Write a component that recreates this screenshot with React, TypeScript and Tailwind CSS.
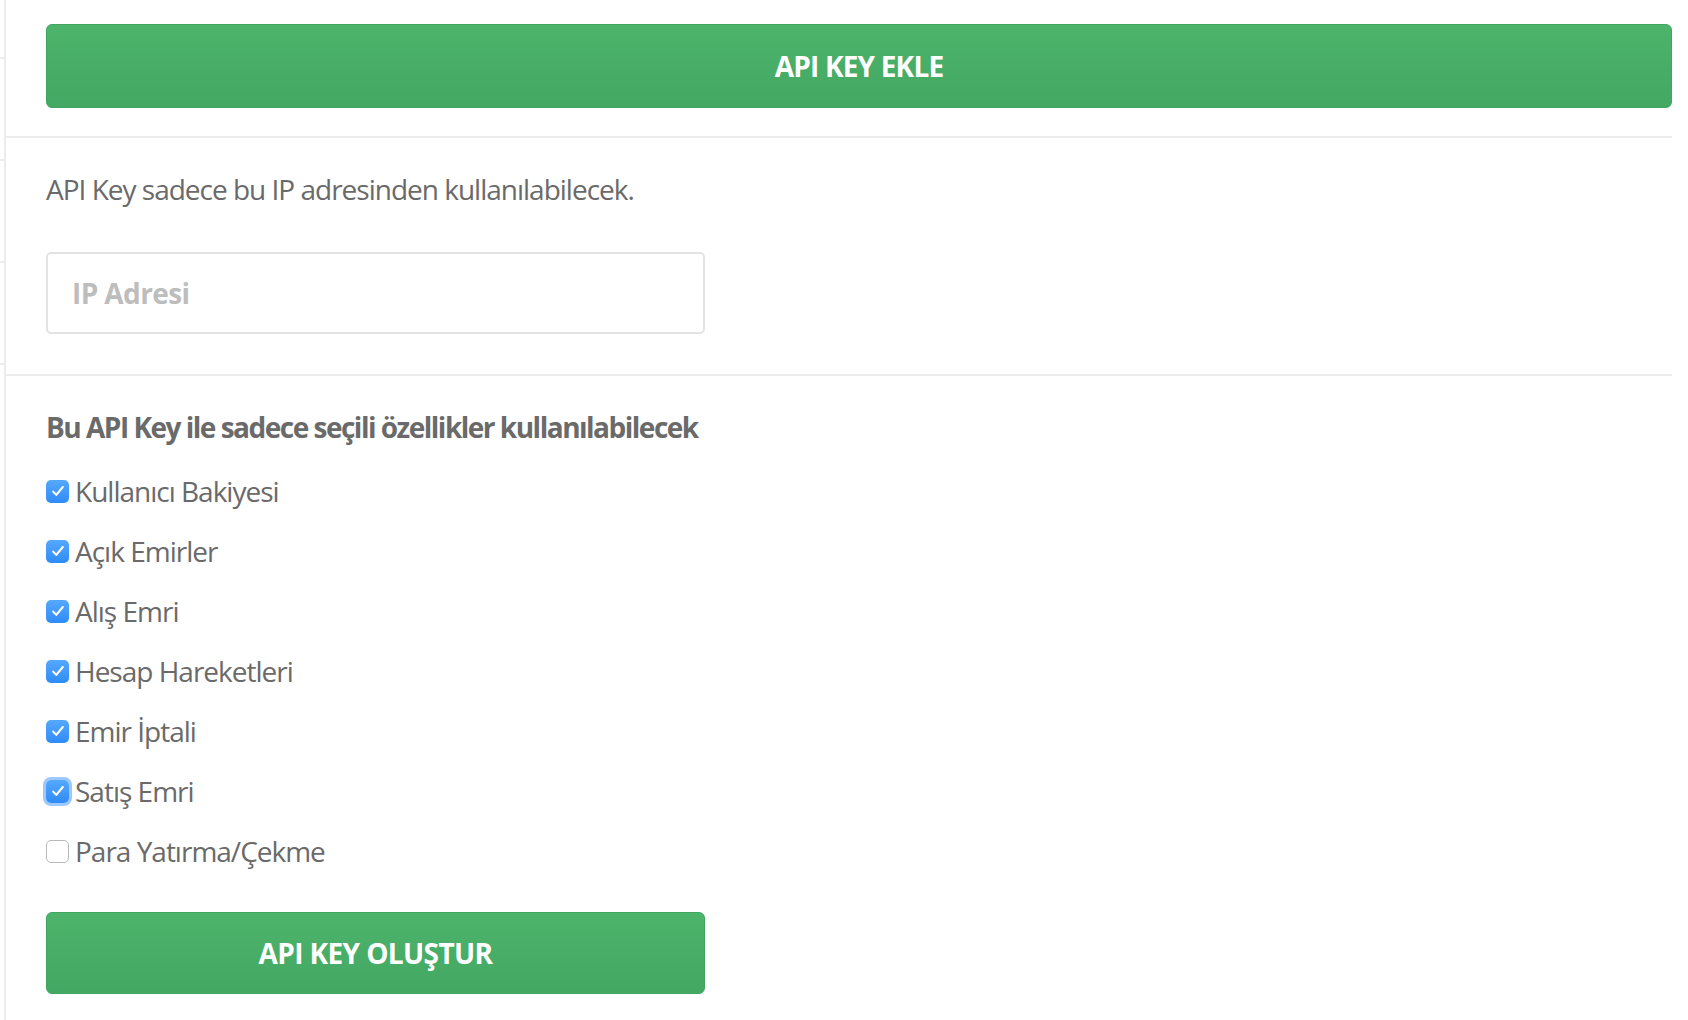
import React from "react";

const permissions = [
  { label: "Kullanıcı Bakiyesi", checked: true },
  { label: "Açık Emirler", checked: true },
  { label: "Alış Emri", checked: true },
  { label: "Hesap Hareketleri", checked: true },
  { label: "Emir İptali", checked: true },
  { label: "Satış Emri", checked: true, focused: true },
  { label: "Para Yatırma/Çekme", checked: false },
];

function Checkbox({ checked, focused }: { checked: boolean; focused?: boolean }) {
  if (!checked) {
    return <span className="block h-[23px] w-[23px] shrink-0 rounded-[5px] border border-[#b9b9b9] bg-white" />;
  }
  return (
    <span
      className={
        "grid h-[23px] w-[23px] shrink-0 place-items-center rounded-[5px] bg-gradient-to-b from-[#55a9fd] to-[#2e8bf6]" +
        (focused ? " ring-[3px] ring-[#9cc8fb]" : "")
      }
    >
      <svg viewBox="0 0 16 16" className="h-[16px] w-[16px]" fill="none">
        <path d="M3.2 8.6l3.1 3.3L12.8 4" stroke="white" strokeWidth="2.1" strokeLinecap="round" strokeLinejoin="round" />
      </svg>
    </span>
  );
}

export default function App() {
  return (
    <div className="flex h-[1020px] w-full bg-white font-['Open_Sans',sans-serif] text-[#6a6a6a]">
      <div className="flex w-[4px] flex-col">
        <div className="h-[59px] border-b-2 border-[#ececec]" />
        <div className="h-[102px] border-b-2 border-[#ececec]" />
        <div className="h-[102px] border-b-2 border-[#ececec]" />
        <div className="h-[102px] border-b-2 border-[#ececec]" />
      </div>
      <div className="w-[2px] bg-[#ececec]" />

      <div className="flex w-[1666px] flex-col">
        <section className="border-b-2 border-[#ececec] pb-[28px] pl-[40px] pt-[24px]">
          <button className="flex h-[84px] w-full items-center justify-center rounded-[6px] border border-[#41a45f] bg-gradient-to-b from-[#4db46c] to-[#43a862] text-[28px] font-bold tracking-[-0.8px] text-white">
            API KEY EKLE
          </button>
        </section>

        <section className="border-b-2 border-[#ececec] pb-[40px] pl-[40px] pt-[32px]">
          <p className="text-[28px] leading-[38px] tracking-[-1px]">
            API Key sadece bu IP adresinden kullanılabilecek.
          </p>
          <div className="mt-[44px] flex h-[82px] w-[659px] items-center rounded-[5px] border-2 border-[#e3e3e3] px-[24px]">
            <span className="text-[28px] font-bold tracking-[-0.6px] text-[#bdbdbd]">IP Adresi</span>
          </div>
        </section>

        <section className="pl-[40px] pt-[32px]">
          <h2 className="text-[28px] font-bold leading-[38px] tracking-[-1.5px]">
            Bu API Key ile sadece seçili özellikler kullanılabilecek
          </h2>
          <ul className="mt-[26px] flex flex-col gap-[22px]">
            {permissions.map((p) => (
              <li key={p.label} className="flex h-[38px] items-center gap-[6px]">
                <Checkbox checked={p.checked} focused={p.focused} />
                <span className="text-[28px] tracking-[-1px]">{p.label}</span>
              </li>
            ))}
          </ul>
          <button className="mt-[42px] flex h-[82px] w-[659px] items-center justify-center rounded-[6px] border border-[#41a45f] bg-gradient-to-b from-[#4db46c] to-[#43a862] text-[28px] font-bold tracking-[-0.6px] text-white">
            API KEY OLUŞTUR
          </button>
        </section>
      </div>
    </div>
  );
}
